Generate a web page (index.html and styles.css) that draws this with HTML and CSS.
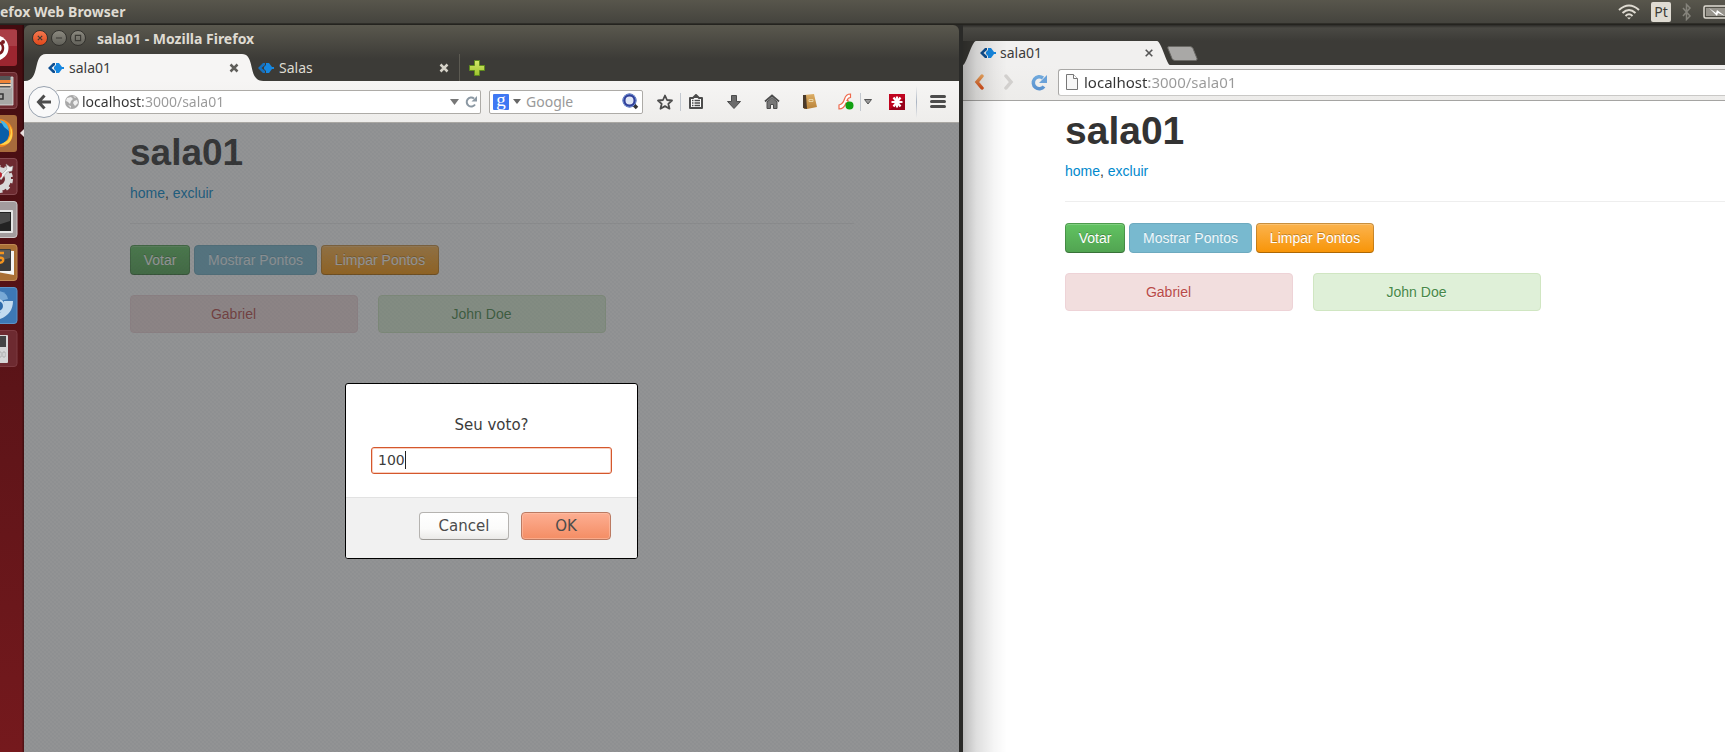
FILE: index.html
```html
<!DOCTYPE html>
<html lang="pt">
<head>
<meta charset="utf-8">
<title>sala01</title>
<link rel="stylesheet" href="styles.css">
</head>
<body>
<svg class="defs" aria-hidden="true">
  <defs>
    <linearGradient id="gOrange" x1="0" y1="0" x2="0" y2="1"><stop offset="0" stop-color="#f0a45c"/><stop offset="1" stop-color="#d9531e"/></linearGradient>
    <linearGradient id="gBlue" x1="0" y1="0" x2="0" y2="1"><stop offset="0" stop-color="#6fa8dc"/><stop offset="1" stop-color="#5b93cf"/></linearGradient>
    <linearGradient id="gGreen" x1="0" y1="0" x2="0" y2="1"><stop offset="0" stop-color="#d6ea6a"/><stop offset="1" stop-color="#9cc22c"/></linearGradient>
    <linearGradient id="gBook" x1="0" y1="0" x2="0" y2="1"><stop offset="0" stop-color="#dcae66"/><stop offset="1" stop-color="#b98238"/></linearGradient>
    <symbol id="fav" viewBox="0 0 16 16">
      <path d="M0 8l5-5h2v2L3.500 8 7 11v2H5z" fill="currentColor"/>
      <path d="M6 7l2-2V3h3l3 4h2v2h-2l-3 4H8v-2L6 9z" fill="#1687e0"/>
    </symbol>
  </defs>
</svg>
<div class="desktop">
  <header class="panel">
    <div class="panel-title">efox Web Browser</div>
    <div class="indicators">
      <svg width="22" height="16" viewBox="0 0 22 16" fill="none" stroke="#dfdbd2" stroke-width="2"><path d="M1 6Q11-3 21 6M4.500 9Q11 3 17.500 9M7.500 12Q11 8.500 14.500 12"/><path d="M9 13.500h4L11 15.500z" fill="#dfdbd2" stroke="none"/></svg>
      <span class="kbd">Pt</span>
      <svg width="10" height="18" viewBox="0 0 10 18" fill="none" stroke="#85837b" stroke-width="1.500"><path d="M1 5l7 8-3.500 3.500v-15L8 5l-7 8"/></svg>
      <svg width="22" height="14" viewBox="0 0 22 14"><rect x="1" y="1" width="26" height="12" rx="1.500" fill="none" stroke="#dfdbd2" stroke-width="1.500"/><rect x="3" y="3" width="24" height="8" fill="#96938b"/><path d="M6 3l7 5 1-3 8 6-7-3-1 3z" fill="#fff"/></svg>
    </div>
  </header>

  <nav class="launcher" aria-label="Launcher">
    <svg class="tile" viewBox="0 0 18 37"><rect x="-10" width="27" height="37" rx="3" fill="#9c2630"/><rect x="-10" y="1" width="27" height="16" fill="#b6555c" opacity=".5"/><circle cx="-4" cy="19" r="12.500" fill="#fff"/><circle cx="-3" cy="19" r="6" fill="none" stroke="#7c1a20" stroke-width="2.500" stroke-dasharray="8 2"/><circle cx="3" cy="13" r="2" fill="#7c1a20"/></svg>
    <svg class="tile" viewBox="0 0 18 37"><rect x="-10" y=".5" width="27" height="36" rx="3" fill="#6d2a30" stroke="#864a50"/><path d="M-2 4h13v12H-2z" fill="#555"/><path d="M-2 8h13v3H-2z" fill="#f08437"/><path d="M-2 12h13v2H-2z" fill="#f8d7b5"/><path d="M-2 16h13V5h2v28H-2z" fill="#a8a8a6" stroke="#ddd" stroke-width=".8"/><path d="M-1 22h4v5h-4" fill="none" stroke="#333" stroke-width="1.500"/></svg>
    <svg class="tile" viewBox="0 0 18 37"><rect x="-10" width="27" height="37" rx="3" fill="#a86b3c"/><circle cx="-1" cy="18" r="14" fill="#f58a1f"/><path d="M-1 8Q10 8 9 20Q7 29-1 29z" fill="#0a5ea8"/><path d="M0 5Q8 7 9 16L4 12z" fill="#42b6ea"/><path d="M9 9q4 9-1 16l-8 5q14 1 12-15z" fill="#ffd24a"/></svg>
    <svg class="tile" viewBox="0 0 18 37"><rect x="-10" y=".5" width="27" height="36" rx="3" fill="#6d2a30" stroke="#864a50"/><circle cx="-1" cy="21" r="9" fill="none" stroke="#d9d9d9" stroke-width="6"/><circle cx="-1" cy="21" r="12.500" fill="none" stroke="#d9d9d9" stroke-width="3" stroke-dasharray="4 4"/><path d="M-1 19L7 11 6 6l4 3 3-1-1 5-5 1L1 22z" fill="#eee" stroke="#999" stroke-width=".5"/><circle cx="-1" cy="17" r="3" fill="#b8232f"/></svg>
    <svg class="tile" viewBox="0 0 18 37"><rect x="-10" y=".5" width="27" height="36" rx="3" fill="#a39c9e" stroke="#cfc8c9"/><rect x="-6" y="9" width="19" height="23" rx="1" fill="#e6e6e6"/><rect x="-6" y="11" width="17" height="19" fill="#222"/><path d="M-6 12h16v8l-16 5z" fill="#4a4a4a"/></svg>
    <svg class="tile" viewBox="0 0 18 37"><rect x="-10" y=".5" width="27" height="36" rx="3" fill="#a96f35" stroke="#c08a55"/><path d="M-2 6l16 1v24l-16-3z" fill="#f5f5f5"/><rect x="-6" y="5" width="17" height="22" rx="1" fill="#3b3b3b"/><path d="M-6 6h16v8l-16 4z" fill="#5a5a58"/><path d="M-1 9h5M-1 14q5-1 4 3-1 2-5 2" stroke="#f3941f" stroke-width="2.500" fill="none"/></svg>
    <svg class="tile" viewBox="0 0 18 37"><rect x="-10" y=".5" width="27" height="36" rx="3" fill="#3d78b5" stroke="#5d92c6"/><path d="M-2 4Q7 5 8 12L0 14z" fill="#78a9d6"/><path d="M4 14h9q0 13-13 18v-6q5-4 4-12z" fill="#c3dbf0"/><circle cx="-2" cy="19" r="6" fill="#2f6bab" stroke="#c3dbf0" stroke-width="2"/></svg>
    <svg class="tile" viewBox="0 0 18 37"><rect x="-10" y=".5" width="27" height="36" rx="3" fill="#6d2a30" stroke="#7d3a40"/><rect x="-6" y="5" width="14" height="28" rx="1" fill="#d6d6d6"/><rect x="-6" y="6" width="12" height="11" fill="#444"/><path d="M-1 22h2v5h-2zM3 22h2v5H3z" fill="#eee" stroke="#999" stroke-width=".7"/></svg>
    <svg class="running" width="4" height="8" viewBox="0 0 4 8"><path d="M4 0v8L0 4z" fill="#e8dedd"/></svg>
  </nav>

  <section class="firefox">
    <div class="ff-title">
      <button class="wc close" aria-label="Close"><svg viewBox="0 0 16 16"><path d="M5.500 5.500l5 5m0-5l-5 5"/></svg></button>
      <button class="wc" aria-label="Minimize"><svg viewBox="0 0 16 16"><path d="M4.500 8h7"/></svg></button>
      <button class="wc" aria-label="Maximize"><svg viewBox="0 0 16 16"><path d="M5 5h6v6H5z"/></svg></button>
      <span class="ff-name">sala01 - Mozilla Firefox</span>
    </div>
    <div class="ff-tabs">
      <svg class="curve" width="22" height="28" viewBox="0 0 22 28"><path d="M0 28v-1C17 28 8 0 22 0v28z" fill="#f6f5f4"/></svg>
      <div class="ff-tab">
        <svg class="fav" width="16" height="16"><use href="#fav"/></svg><span class="tab-text">sala01</span>
        <button class="tab-x" aria-label="Close tab"><svg width="10" height="10" viewBox="0 0 10 10"><path d="M1.500 1.500l7 7m0-7l-7 7" stroke="#5f5e5a" stroke-width="2.500"/></svg></button>
      </div>
      <svg class="curve" width="22" height="28" viewBox="0 0 22 28"><path d="M22 28v-1C5 28 14 0 0 0v28z" fill="#f6f5f4"/></svg>
      <div class="ff-tab idle">
        <svg class="fav" width="16" height="16"><use href="#fav"/></svg><span class="tab-text">Salas</span>
        <button class="tab-x" aria-label="Close tab"><svg width="10" height="10" viewBox="0 0 10 10"><path d="M1.500 1.500l7 7m0-7l-7 7" stroke="#d5d2c8" stroke-width="2.500"/></svg></button>
      </div>
      <button class="plus" aria-label="New tab"><svg width="16" height="16" viewBox="0 0 16 16"><path d="M5.500.5h5v5h5v5h-5v5h-5v-5h-5v-5h5z" fill="url(#gGreen)" stroke="#5f8a1c"/></svg></button>
    </div>
    <div class="ff-bar">
      <button class="back" aria-label="Back"><svg width="16" height="16" viewBox="0 0 16 16" fill="none" stroke="#4c4c4c" stroke-width="3"><path d="M8.500 1.500L2.500 8l6 6.500M3 8h12"/></svg></button>
      <div class="ff-url">
        <svg width="14" height="14" viewBox="0 0 14 14"><circle cx="7" cy="7" r="7" fill="#a9a9a9"/><path d="M2 3l4-1 2 2-2 2-1 3-2-2-2-1zM9 6l3-1 1 3-3 3-2-3zM8 1l3 1-1 1zM3 10l3 1v2z" fill="#f0f0f0"/></svg>
        <input class="url-text" aria-label="Address" value="localhost:3000/sala01">
        <svg width="9" height="6" viewBox="0 0 9 6"><path d="M0 0h9L4.500 6z" fill="#777"/></svg>
        <button class="plain" aria-label="Reload"><svg width="12" height="12" viewBox="0 0 12 12"><path d="M10 8.500A4.500 4.500 0 1 1 9 2.500" fill="none" stroke="#8b98a3" stroke-width="2"/><path d="M12 0v5.500H6.500z" fill="#8b98a3"/></svg></button>
      </div>
      <div class="ff-search">
        <span class="g-logo">g</span>
        <svg width="8" height="5" viewBox="0 0 8 5"><path d="M0 0h8L4 5z" fill="#666"/></svg>
        <input class="search-text" aria-label="Search" placeholder="Google">
        <svg width="17" height="17" viewBox="0 0 17 17"><path d="M11 11l4 4" stroke="#333" stroke-width="3.500"/><circle cx="7.500" cy="7.500" r="5.500" fill="#dfe6f5" stroke="#31409a" stroke-width="3"/><circle cx="7.500" cy="7.500" r="6.500" fill="none" stroke="#6f8fd0"/></svg>
      </div>
      <button class="tb star" aria-label="Bookmark"><svg width="16" height="16" viewBox="0 0 16 16"><path d="M8 1.500l2 4.500 5 .5-3.700 3.300 1.200 4.900L8 12.100l-4.500 2.600 1.200-4.900L1 6.500 6 6z" fill="none" stroke="#4c4c4c" stroke-width="1.800" stroke-linejoin="round"/></svg></button>
      <i class="sep"></i>
      <button class="tb list" aria-label="Bookmarks menu"><svg width="16" height="16" viewBox="0 0 16 16"><path d="M2 4h3l3-3 3 3h3v10H2z" fill="#fff" stroke="#4c4c4c" stroke-width="2" stroke-linejoin="round"/><path d="M5 4l3-3 3 3z" fill="#4c4c4c"/><path d="M4 6.500h1.500m1 0H12M4 9h1.500m1 0H12M4 11.500h1.500m1 0H12" stroke="#4c4c4c" stroke-width="1.300"/></svg></button>
      <button class="tb" aria-label="Downloads"><svg width="14" height="14" viewBox="0 0 14 14"><path d="M4.500.5h5v6h4L7 13.500.5 6.500h4z" fill="#6b6b6b" stroke="#4c4c4c"/></svg></button>
      <button class="tb" aria-label="Home"><svg width="16" height="15" viewBox="0 0 16 15"><path d="M3 8l5-4.500L13 8v6.500H9.500v-4h-3v4H3z" fill="#777" stroke="#4c4c4c"/><path d="M1 7.500l7-6 7 6" fill="none" stroke="#4c4c4c" stroke-width="1.800"/></svg></button>
      <button class="tb" aria-label="Book"><svg width="14" height="15" viewBox="0 0 14 15"><path d="M1 1l10-1 3 13-10 2H1z" fill="url(#gBook)"/><path d="M0 1h3l1 14-4-1z" fill="#4a3a2a"/><path d="M6 5.500h4v2H6z" fill="none" stroke="#f0dfb5" stroke-width=".8"/></svg></button>
      <button class="tb flash" aria-label="Flash"><svg width="16" height="17" viewBox="0 0 16 17"><path d="M12.500 1Q8 1 6.500 6T1 12v4q5 0 7-6h2V7.500H9q1-3 3.500-3z" fill="#fff" stroke="#ee6a4d" stroke-width="1.200"/><circle cx="11.500" cy="12.500" r="4" fill="#12a012"/></svg></button>
      <i class="sep"></i>
      <button class="tb caret-btn" aria-label="Flash menu"><svg width="8" height="6" viewBox="0 0 8 6"><path d="M.5.5h7L4 5z" fill="#999" stroke="#555"/></svg></button>
      <button class="tb" aria-label="Passwords"><svg width="16" height="16" viewBox="0 0 16 16"><path d="M0 0h16v16H0z" fill="#c0041f"/><path d="M0 16L16 4v12z" fill="#98021a"/><path d="M8 2.500v11M2.500 8h11M4.500 3.500l7 9m0-9l-7 9" stroke="#fff" stroke-width="2.200"/></svg></button>
      <i class="sep tall"></i>
      <button class="tb menu" aria-label="Menu"><svg width="16" height="13" viewBox="0 0 16 13"><path d="M1.500 1.500h13m-13 5h13m-13 5h13" stroke="#4c4c4c" stroke-width="3" stroke-linecap="round"/></svg></button>
    </div>
    <div class="ff-view">
      <main class="page">
        <h1>sala01</h1>
        <p><a href="#">home</a>, <a href="#">excluir</a></p>
        <hr>
        <div class="actions"><button class="btn green">Votar</button><button class="btn blue">Mostrar Pontos</button><button class="btn orange">Limpar Pontos</button></div>
        <div class="cards"><div class="alert red">Gabriel</div><div class="alert ok">John Doe</div></div>
      </main>
      <div class="modal">
        <form class="dialog">
          <div class="dialog-body">
            <label for="voto">Seu voto?</label>
            <div class="field"><input id="voto" type="text" value="100"><i class="caret"></i></div>
          </div>
          <div class="dialog-foot"><button type="button" class="dlg">Cancel</button><button type="button" class="dlg primary">OK</button></div>
        </form>
      </div>
    </div>
  </section>

  <section class="chrome">
    <div class="cr-tabs">
      <svg class="slope" width="13" height="24" viewBox="0 0 13 24"><path d="M0 24C3 24 9 0 13 0v24z" fill="#f1f0ef"/></svg>
      <div class="cr-tab">
        <svg class="fav" width="16" height="16"><use href="#fav"/></svg><span class="tab-text">sala01</span>
        <button class="tab-x" aria-label="Close tab"><svg width="8" height="8" viewBox="0 0 8 8"><path d="M.7.7l6.600 6.600m0-6.600L.7 7.300" stroke="#555" stroke-width="1.600"/></svg></button>
      </div>
      <svg class="slope" width="13" height="24" viewBox="0 0 13 24"><path d="M13 24C10 24 4 0 0 0v24z" fill="#f1f0ef"/></svg>
      <button class="newtab" aria-label="New tab"><svg width="31" height="15" viewBox="0 0 31 15"><path d="M2 .5h21q2 0 3 2l4 10q.5 2-1.500 2H8q-2 0-3-2L.8 2Q.5.5 2 .5z" fill="#a9a8a6" stroke="#6a6965"/></svg></button>
    </div>
    <div class="cr-bar">
      <button class="plain" aria-label="Back"><svg width="10" height="16" viewBox="0 0 10 16"><path d="M8 2L3 8l5 6" fill="none" stroke="url(#gOrange)" stroke-width="3.500" stroke-linecap="round"/></svg></button>
      <button class="plain" aria-label="Forward"><svg width="10" height="16" viewBox="0 0 10 16"><path d="M2 2l5 6-5 6" fill="none" stroke="#d2d0ce" stroke-width="3.500" stroke-linecap="round"/></svg></button>
      <button class="plain" aria-label="Reload"><svg width="16" height="17" viewBox="0 0 16 17"><path d="M13 12.500A6 6 0 1 1 12 4" fill="none" stroke="url(#gBlue)" stroke-width="3.500"/><path d="M16 1v8H8z" fill="#6ba2d9"/></svg></button>
      <div class="cr-url">
        <svg width="12" height="16" viewBox="0 0 12 16"><path d="M.5.500h7l4 4v11H.5z" fill="#f7f7f7" stroke="#777"/><path d="M7.500.5v4h4" fill="#fff" stroke="#777"/></svg>
        <input class="url-text" aria-label="Address" value="localhost:3000/sala01">
      </div>
    </div>
    <main class="page">
      <h1>sala01</h1>
      <p><a href="#">home</a>, <a href="#">excluir</a></p>
      <hr>
      <div class="actions"><button class="btn green">Votar</button><button class="btn blue">Mostrar Pontos</button><button class="btn orange">Limpar Pontos</button></div>
      <div class="cards"><div class="alert red">Gabriel</div><div class="alert ok">John Doe</div></div>
    </main>
  </section>
</div>
</body>
</html>
```
FILE: styles.css
```css
* { box-sizing: border-box; }
body { margin: 0; font-family: "Noto Sans", "Open Sans", sans-serif; font-size: 14px; color: #3c3c3c; }
button { margin: 0; padding: 0; border: 0; background: none; font: inherit; color: inherit; }
input { margin: 0; padding: 0; border: 0; outline: 0; background: none; font: inherit; min-width: 0; }
svg { display: block; flex: none; }
.defs { position: absolute; width: 0; height: 0; }

.desktop {
  display: grid;
  grid-template-columns: 24px minmax(0, 935fr) minmax(0, 766fr);
  grid-template-rows: 25px 1fr;
  min-height: 100vh;
  overflow: hidden;
  background: #2b2a27;
}

/* top panel */
.panel {
  grid-column: 1 / -1;
  display: flex;
  justify-content: space-between;
  align-items: center;
  padding-bottom: 2px;
  background: linear-gradient(#58564c, #45443e 90%, #24231f 96%);
  color: #dfdbd2;
}
.panel-title { font-weight: bold; white-space: nowrap; line-height: 22px; }
.indicators { display: flex; align-items: center; gap: 11px; }
.kbd { width: 20px; height: 20px; border-radius: 2px; background: #dfdbd2; color: #3c3b37; text-align: center; line-height: 20px; }

/* launcher */
.launcher {
  position: relative;
  display: flex;
  flex-direction: column;
  gap: 6px;
  padding-top: 4px;
  background: linear-gradient(90deg, transparent 22px, rgba(0,0,0,.3) 23px), linear-gradient(#420c10, #5c1418 50%, #75191d);
}
.tile { width: 18px; height: 37px; }
.running { position: absolute; right: 0; top: 104px; }

/* firefox */
.firefox { display: flex; flex-direction: column; background: linear-gradient(#5a584e, #3c3b37 34px); border-radius: 6px 6px 0 0; overflow: hidden; }
.ff-title { display: flex; align-items: center; gap: 3px; height: 29px; padding: 0 8px 3px; }
.wc { width: 16px; height: 16px; border: 1px solid #33322e; border-radius: 50%; background: linear-gradient(#8b897f, #62615a); }
.wc.close { background: linear-gradient(#f4784f, #e0481b); }
.wc svg { width: 14px; height: 14px; fill: none; stroke: #3a3934; stroke-width: 1.300; }
.ff-name { margin-left: 8px; font-weight: bold; color: #dfdbd2; white-space: nowrap; }
.ff-tabs { display: flex; height: 28px; line-height: 20px; padding-bottom: 1px; margin-bottom: -1px; }
.curve { height: 28px; }
.ff-tab { display: flex; align-items: center; width: 196px; height: 28px; padding: 0 3px 1px 2px; background: #f6f5f4; }
.ff-tab.idle { width: 218px; margin-left: -22px; padding: 0 10px 1px 16px; background: none; color: #dfdbd2; border-right: 1px solid #5c5a52; }
.fav { color: #0d4f92; }
.idle .fav { color: #1672c0; }
.tab-text { margin-left: 5px; flex: 1; }
.tab-x { display: grid; place-items: center; width: 10px; height: 10px; }
.plus { display: grid; place-items: center; width: 34px; height: 28px; }
.ff-bar { display: flex; align-items: center; height: 42px; background: linear-gradient(#f6f5f4, #eeedeb); border-bottom: 1px solid #a9a7a3; padding-left: 4px; }
.back { position: relative; flex: none; display: grid; place-items: center; width: 32px; height: 32px; border: 1px solid #98a2af; border-radius: 50%; background: #f9f9f9; }
.ff-url, .ff-search { display: flex; align-items: center; height: 24px; background: #fff; border: 1px solid #adaba7; border-radius: 2px; }
.ff-url { flex: 1; min-width: 0; margin-left: -4px; padding: 0 3px 0 9px; border-left: 0; }
.url-text { flex: 1; height: 22px; margin-left: 3px; color: transparent; background: linear-gradient(90deg, #333 61px, #999 61px); -webkit-background-clip: text; background-clip: text; }
.plain { flex: none; }
.ff-url .plain { margin-left: 6px; }
.ff-search { width: 154px; margin-left: 8px; padding: 0 2px 0 3px; }
.g-logo { width: 16px; height: 16px; border-radius: 1px; background: #3f78f3; color: #fff; font: 19px/12px "Liberation Serif", serif; text-align: center; margin-right: 4px; }
.search-text { width: 96px; margin-left: 5px; }
.search-text::placeholder { color: #999; opacity: 1; }
.tb { flex: none; display: grid; place-items: center; width: 38px; height: 32px; }
.star { width: 30px; margin-left: 7px; }
.list { width: 30px; margin-right: 4px; }
.flash { width: 31px; padding-left: 2px; }
.caret-btn { width: 13px; margin-right: 4px; }
.menu { width: 42px; }
.sep { width: 1px; height: 18px; background: #c3c8cf; }
.sep.tall { height: 32px; background: linear-gradient(transparent, #aab4c2, transparent); }
.ff-view { position: relative; flex: 1; background: #fff; }

/* web page */
.page { font-family: "Liberation Sans", Arial, sans-serif; font-size: 14px; line-height: 20px; color: #333; display: flow-root; }
.ff-view .page { width: 724px; margin-left: 106px; }
.page h1 { margin: 10px 0; font-size: 39px; line-height: 40px; }
.ff-view h1 { font-size: 37px; }
.page p { margin: 0; }
.page a { color: #08c; text-decoration: none; }
.page hr { margin: 20px 0; border: 0; border-top: 1px solid #eee; border-bottom: 1px solid #fff; }
.actions { display: flex; gap: 4px; }
.btn { height: 30px; padding: 0; border: 1px solid rgba(0,0,0,.2); border-bottom-color: rgba(0,0,0,.3); border-radius: 4px; color: #fff; text-shadow: 0 -1px 0 rgba(0,0,0,.25); box-shadow: inset 0 1px 0 rgba(255,255,255,.2); white-space: nowrap; }
.green { width: 60px; background: linear-gradient(#62c462, #51a351) border-box; }
.orange { width: 118px; background: linear-gradient(#fbb450, #f89406) border-box; }
.blue { width: 123px; background: #78b9cf; border-color: #6daabf; box-shadow: none; color: #eef7fa; text-shadow: 0 -1px 0 rgba(0,0,0,.12); }
.cards { display: flex; gap: 20px; margin-top: 20px; }
.alert { width: 228px; padding: 8px 35px 8px 14px; border: 1px solid; border-radius: 4px; text-align: center; text-shadow: 0 1px 0 rgba(255,255,255,.5); }
.red { background: #f2dede; border-color: #eed3d7; color: #b94a48; }
.ok { background: #dff0d8; border-color: #d0e6c2; color: #468847; }

/* prompt */
.modal {
  position: absolute;
  inset: 0;
  padding-top: 260px;
  background:
    conic-gradient(rgba(90,96,110,.06) 25%, transparent 0 50%, rgba(90,96,110,.06) 0 75%, transparent 0) 0 0 / 4px 4px,
    rgba(54,56,57,.54);
}
.dialog { width: 293px; margin: 0 auto; border: 1px solid #000; border-radius: 3px; background: #fff; font: 15px/20px "DejaVu Sans", sans-serif; color: #3c3c3c; overflow: hidden; }
.dialog-body { padding: 31px 25px 23px; }
.dialog label { display: block; text-align: center; margin-bottom: 12px; }
.field { position: relative; }
.field input { display: block; width: 100%; height: 27px; padding: 0 6px 1px; border: 1px solid #d4572c; border-radius: 3px; box-shadow: inset 0 0 0 1px #f9cfc0; color: #3c3c3c; font-size: 14px; }
.caret { position: absolute; left: 34px; top: 4px; width: 1px; height: 18px; background: #222; }
.dialog-foot { display: flex; justify-content: flex-end; gap: 12px; padding: 14px 26px 18px; background: #f1f1f1; border-top: 1px solid #e2e2e2; }
.dlg { width: 90px; height: 28px; border: 1px solid #b5b3b0; border-bottom-color: #9b9995; border-radius: 4px; background: linear-gradient(#fff, #fbfbfa 60%, #ebeae8); color: #4c4c4c; }
.dlg.primary { border-color: #bb7a62; background: linear-gradient(#fdae92, #f48d64); box-shadow: inset 0 0 0 1px rgba(255,200,175,.5); }

/* chrome */
.chrome { position: relative; display: flex; flex-direction: column; border-left: 4px solid #2a2a28; background: #fff; min-width: 0; }
.chrome::after { content: ""; position: absolute; left: 0; top: 16px; bottom: 0; width: 44px; pointer-events: none; background: linear-gradient(90deg, rgba(0,0,0,.27), rgba(0,0,0,.13) 30%, rgba(0,0,0,.04) 70%, transparent); }
.cr-tabs { display: flex; align-items: flex-end; height: 40px; background: linear-gradient(#2c2b28, #4a4944 3px, #3c3b37 16px); }
.cr-tab { display: flex; align-items: center; width: 181px; height: 24px; padding: 0 3px 1px 4px; background: #f1f0ef; }
.cr-tab .tab-text { margin-left: 4px; }
.newtab { align-self: flex-end; margin: 0 0 4px -3px; }
.cr-bar { display: flex; align-items: center; height: 36px; padding: 0 0 1px 11px; background: linear-gradient(#f1f0ef, #edecea); border-bottom: 1px solid #a5a4a2; }
.cr-bar .plain + .plain { margin-left: 20px; }
.cr-bar .plain:nth-child(3) { margin-left: 17px; }
.cr-url { flex: 1; display: flex; align-items: center; height: 27px; margin-left: 11px; padding-left: 7px; background: #fff; border: 1px solid #a9a8a6; border-right: 0; border-bottom-color: #c9c8c6; border-radius: 3px 0 0 3px; font-size: 15px; }
.cr-url .url-text { margin-left: 6px; background-image: linear-gradient(90deg, #333 65px, #999 65px); }
.chrome .page { padding-left: 102px; }
```
